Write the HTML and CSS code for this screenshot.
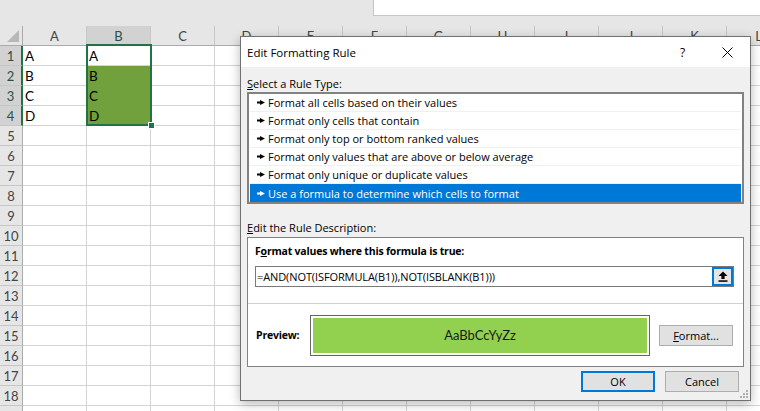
FILE: index.html
```html
<!DOCTYPE html>
<html>
<head>
<meta charset="utf-8">
<title>Edit Formatting Rule</title>
<link rel="stylesheet" href="styles.css">
</head>
<body>
<div class="topbar"><div class="formula"></div></div>
<div class="sheet">
  <div class="corner"><span class="corner-tri"></span></div>
  <div class="colheads">
    <div class="ch">A</div><div class="ch sel">B</div><div class="ch">C</div><div class="ch">D</div>
    <div class="ch">E</div><div class="ch">F</div><div class="ch">G</div><div class="ch">H</div>
    <div class="ch">I</div><div class="ch">J</div><div class="ch">K</div><div class="ch">L</div>
  </div>
  <div class="rowheads">
    <div class="rh sel">1</div><div class="rh sel">2</div><div class="rh sel">3</div><div class="rh sel">4</div>
    <div class="rh">5</div><div class="rh">6</div><div class="rh">7</div><div class="rh">8</div>
    <div class="rh">9</div><div class="rh">10</div><div class="rh">11</div><div class="rh">12</div>
    <div class="rh">13</div><div class="rh">14</div><div class="rh">15</div><div class="rh">16</div>
    <div class="rh">17</div><div class="rh">18</div><div class="rh">19</div>
  </div>
  <div class="cells">
    <div class="data">
      <div class="cell">A</div><div class="cell">A</div>
      <div class="cell">B</div><div class="cell fill">B</div>
      <div class="cell">C</div><div class="cell fill">C</div>
      <div class="cell">D</div><div class="cell fill">D</div>
    </div>
    <div class="selection"><span class="handle"></span></div>
  </div>
</div>

<div class="dialog">
  <div class="titlebar">
    <div class="title">Edit Formatting Rule</div>
    <div class="tbtn help">?</div>
    <div class="tbtn close">
      <svg width="11" height="11" viewBox="0 0 11 11"><path d="M0.5 0.5L10.5 10.5M10.5 0.5L0.5 10.5" stroke="#000" stroke-width="1" fill="none"/></svg>
    </div>
  </div>
  <div class="dbody">
    <div class="label first"><u>S</u>elect a Rule Type:</div>
    <div class="list">
      <div class="item"><svg class="arr" width="8" height="5" viewBox="0 0 8 5"><path d="M0 1.6h3.5v1.8H0z M3 0l5 2.5L3 5z"/></svg><span>Format all cells based on their values</span></div>
      <div class="item"><svg class="arr" width="8" height="5" viewBox="0 0 8 5"><path d="M0 1.6h3.5v1.8H0z M3 0l5 2.5L3 5z"/></svg><span>Format only cells that contain</span></div>
      <div class="item"><svg class="arr" width="8" height="5" viewBox="0 0 8 5"><path d="M0 1.6h3.5v1.8H0z M3 0l5 2.5L3 5z"/></svg><span>Format only top or bottom ranked values</span></div>
      <div class="item"><svg class="arr" width="8" height="5" viewBox="0 0 8 5"><path d="M0 1.6h3.5v1.8H0z M3 0l5 2.5L3 5z"/></svg><span>Format only values that are above or below average</span></div>
      <div class="item"><svg class="arr" width="8" height="5" viewBox="0 0 8 5"><path d="M0 1.6h3.5v1.8H0z M3 0l5 2.5L3 5z"/></svg><span>Format only unique or duplicate values</span></div>
      <div class="item active"><svg class="arr" width="8" height="5" viewBox="0 0 8 5"><path d="M0 1.6h3.5v1.8H0z M3 0l5 2.5L3 5z"/></svg><span>Use a formula to determine which cells to format</span></div>
    </div>
    <div class="label second"><u>E</u>dit the Rule Description:</div>
    <div class="desc">
      <div class="desc-top">
        <div class="blabel">F<u>o</u>rmat values where this formula is true:</div>
        <div class="input">
          <span class="ftext">=AND(NOT(ISFORMULA(B1)),NOT(ISBLANK(B1)))</span>
          <span class="collapse">
            <svg width="10" height="11" viewBox="0 0 10 11"><path d="M5 0.5L9.5 5H6.6V8H3.4V5H0.5Z" fill="#000"/><rect x="0.5" y="9.3" width="9" height="1.5" fill="#000"/></svg>
          </span>
        </div>
      </div>
      <div class="preview-row">
        <div class="blabel plabel">Preview:</div>
        <div class="preview"><div class="swatch">AaBbCcYyZz</div></div>
        <div class="btn fmt"><u>F</u>ormat...</div>
      </div>
    </div>
    <div class="actions">
      <div class="btn default">OK</div>
      <div class="btn">Cancel</div>
    </div>
  </div>
  <svg class="grip" width="8" height="8" viewBox="0 0 8 8">
    <rect x="6" y="0" width="2" height="2" fill="#b0b0b0"/>
    <rect x="3" y="3" width="2" height="2" fill="#b0b0b0"/>
    <rect x="6" y="3" width="2" height="2" fill="#b0b0b0"/>
    <rect x="0" y="6" width="2" height="2" fill="#b0b0b0"/>
    <rect x="3" y="6" width="2" height="2" fill="#b0b0b0"/>
    <rect x="6" y="6" width="2" height="2" fill="#b0b0b0"/>
  </svg>
</div>
</body>
</html>
```

FILE: styles.css
```css
* { box-sizing: border-box; }
html, body { margin: 0; padding: 0; }
body {
  width: 760px;
  height: 411px;
  overflow: hidden;
  position: relative;
  background: #fff;
  font-family: "Open Sans", "Noto Sans", sans-serif;
}

/* ---------- spreadsheet ---------- */
.topbar { height: 26px; background: #e6e6e6; }
.formula {
  margin-left: 373px;
  height: 16px;
  background: #fff;
  border-left: 1px solid #c6c6c6;
  border-bottom: 1px solid #c6c6c6;
}
.sheet {
  display: grid;
  grid-template-columns: 23px 1fr;
  grid-template-rows: 20px 1fr;
  height: 385px;
  font-family: "Lato", "Liberation Sans", sans-serif;
}
.corner {
  background: #e6e6e6;
  border-right: 1px solid #ababab;
  border-bottom: 1px solid #ababab;
  display: flex;
  justify-content: flex-end;
  align-items: flex-end;
  padding: 0 3px 3px 0;
}
.corner-tri {
  width: 0; height: 0;
  border-left: 12px solid transparent;
  border-bottom: 12px solid #b8b8b8;
}
.colheads { display: flex; overflow: hidden; }
.ch {
  flex: none;
  width: 64px;
  background: #e6e6e6;
  border-right: 1px solid #c6c6c6;
  border-bottom: 1px solid #ababab;
  text-align: center;
  font-size: 13px;
  line-height: 20px;
  color: #444;
}
.ch.sel {
  background: #d2d2d2;
  border-bottom: 2px solid #217346;
  color: #2b4f45;
}
.rowheads { display: flex; flex-direction: column; overflow: hidden; }
.rh {
  flex: none;
  height: 20px;
  background: #e6e6e6;
  border-right: 1px solid #ababab;
  border-bottom: 1px solid #c6c6c6;
  text-align: center;
  font-size: 13px;
  line-height: 20px;
  color: #444;
}
.rh.sel {
  background: #d2d2d2;
  color: #2b4f45;
  border-right: 2px solid #217346;
}
.cells {
  position: relative;
  background-color: #fff;
  background-image:
    linear-gradient(to right, transparent 63px, #d4d4d4 63px),
    linear-gradient(to bottom, transparent 19px, #d4d4d4 19px);
  background-size: 64px 100%, 100% 20px;
}
.data {
  display: grid;
  grid-template-columns: 64px 64px;
  grid-auto-rows: 20px;
}
.cell {
  font-size: 13.5px;
  color: #000;
  padding: 0 0 0 2px;
  line-height: 20px;
}
.cell.fill { background: #70a13c; height: 20px; }
.selection {
  position: absolute;
  left: 63px;
  top: -2px;
  width: 66px;
  height: 82px;
  border: 2px solid #217346;
}
.handle {
  position: absolute;
  right: -5px;
  bottom: -5px;
  width: 7px;
  height: 7px;
  background: #217346;
  border: 1px solid #fff;
}

/* ---------- dialog ---------- */
.dialog {
  position: absolute;
  left: 240px;
  top: 36px;
  width: 511px;
  height: 365px;
  border: 1px solid #707070;
  background: #f0f0f0;
  box-shadow: 0 3px 10px rgba(0,0,0,0.28);
  display: flex;
  flex-direction: column;
  font-size: 11px;
  color: #000;
}
.titlebar {
  height: 30px;
  flex: none;
  background: #fff;
  display: flex;
  align-items: center;
  padding-left: 6px;
}
.title { flex: 1; font-size: 11.5px; }
.tbtn {
  width: 45px;
  height: 30px;
  display: flex;
  align-items: center;
  justify-content: center;
  font-size: 12px;
}
.dbody { flex: 1; padding: 0 6px; display: flex; flex-direction: column; }
.label { line-height: 16px; }
.label.first { padding-top: 9px; }
.label.second { padding-top: 16px; margin-bottom: 1px; }
.list {
  height: 112px;
  border: 2px solid #828282;
  background: #fff;
  padding: 0 1px;
}
.item {
  height: 18px;
  display: flex;
  align-items: center;
  padding-left: 7px;
  border-bottom: 1px solid #f0f0f0;
}
.item:last-child { border-bottom: none; }
.item .arr { flex: none; margin-right: 3px; fill: #000; }
.item.active { background: #0078d7; color: #fff; }
.item.active .arr { fill: #fff; }
.desc {
  height: 130px;
  border: 1px solid #828282;
  background: #fff;
  display: flex;
  flex-direction: column;
}
.desc-top {
  height: 66px;
  border-bottom: 1px solid #d0d0d0;
  padding: 5px 0 0 7px;
}
.blabel { font-weight: bold; line-height: 16px; font-size: 10.5px; letter-spacing: -0.2px; }
.input {
  margin-top: 7px;
  width: 479px;
  height: 21px;
  border: 1px solid #7a7a7a;
  display: flex;
  align-items: center;
  padding-left: 1px;
}
.ftext { flex: 1; font-size: 11px; letter-spacing: -0.1px; }
.collapse {
  width: 21px;
  height: 19px;
  border: 2px solid #0078d7;
  background: #e5e5e5;
  display: flex;
  align-items: center;
  justify-content: center;
}
.preview-row {
  flex: 1;
  display: flex;
  align-items: center;
  padding-left: 8px;
}
.plabel { width: 54px; }
.preview {
  width: 340px;
  height: 41px;
  border: 1px solid #646464;
  padding: 2px;
  background: #fff;
}
.swatch {
  height: 100%;
  background: #92d050;
  display: flex;
  align-items: center;
  justify-content: center;
  font-family: "Lato", "Liberation Sans", sans-serif;
  font-size: 13px;
  color: #1a1a1a;
}
.btn {
  width: 74px;
  height: 21px;
  background: #e1e1e1;
  border: 1px solid #adadad;
  display: flex;
  align-items: center;
  justify-content: center;
}
.fmt { margin-left: 9px; }
.btn.default { border: 2px solid #0078d7; }
.actions {
  display: flex;
  justify-content: flex-end;
  gap: 10px;
  padding: 4px 5px 0 0;
}
.grip { position: absolute; right: 2px; bottom: 2px; }
```
